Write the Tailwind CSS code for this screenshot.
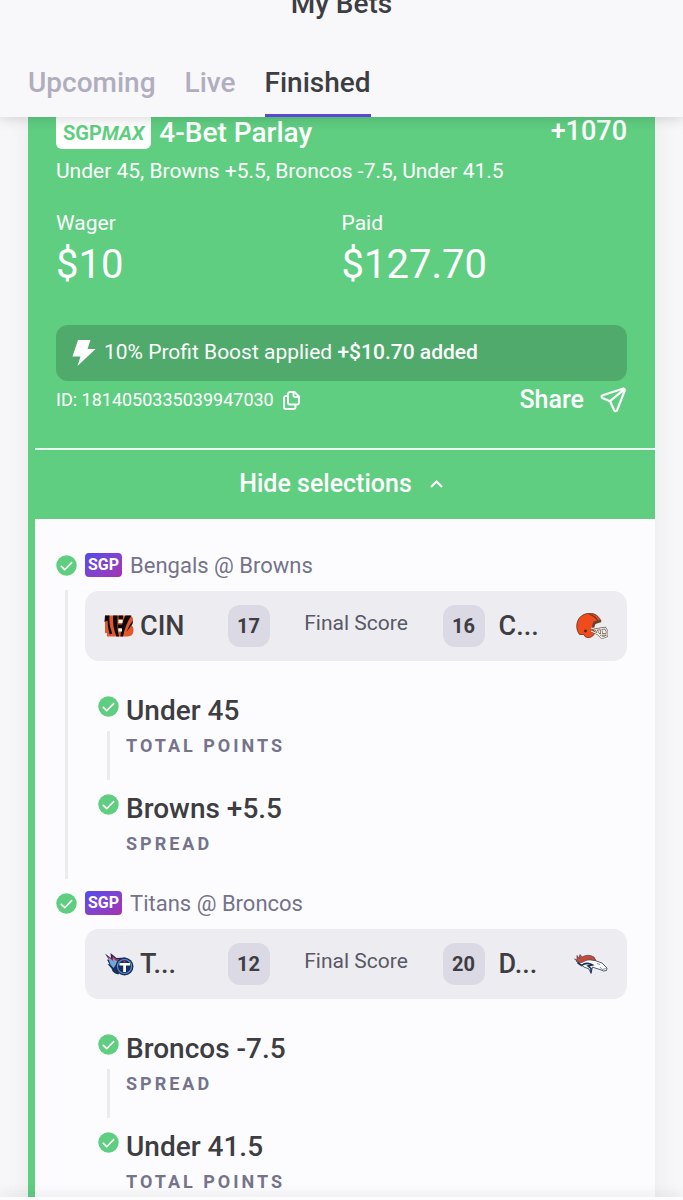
<!DOCTYPE html>
<html lang="en">
<head>
<meta charset="utf-8">
<meta name="viewport" content="width=device-width, initial-scale=1">
<title>My Bets</title>
<script src="https://cdn.jsdelivr.net/npm/@tailwindcss/browser@4"></script>
</head>
<body class="flex h-screen flex-col overflow-hidden bg-[#f7f7fa] font-['Roboto',sans-serif] text-[#3d3d42]">

<svg class="hidden" aria-hidden="true">
  <symbol id="check" viewBox="0 0 22 22">
    <circle cx="11" cy="11" r="10.7" fill="#5fce81"/>
    <path d="M5 11.4l4.1 4L16.9 7.4" fill="none" stroke="#fff" stroke-width="1.7"/>
  </symbol>
</svg>

<header class="relative z-10 shrink-0 bg-[#f8f8fb] shadow-[0_2px_12px_rgba(0,0,0,0.15)]">
  <h1 class="-mt-3 text-center text-[28px] leading-8 font-medium">My Bets</h1>
  <nav class="mt-[47px] flex gap-[29px] px-7 text-[28px] leading-8 font-medium">
    <a href="#" class="pb-[15px] text-[#b0aebe]">Upcoming</a>
    <a href="#" class="pb-[15px] text-[#b0aebe]">Live</a>
    <a href="#" aria-current="page" class="border-b-[3px] border-[#5e48d6] pb-[15px]">Finished</a>
  </nav>
</header>

<main class="min-h-0 flex-1 overflow-hidden px-7">
  <article class="-mt-1 border-l-[7px] border-[#5fce81] bg-[#fcfcfe] shadow-[0_0_24px_rgba(0,0,0,0.06)]">
    <section class="bg-[#5fce81] text-white">
      <div class="pr-7 pb-8 pl-[21px]">
        <div class="flex items-start justify-between">
          <div class="flex items-center gap-2">
            <span class="rounded-md bg-white px-[7px] pt-1 text-xl leading-8 font-bold text-[#5fce81]">SGP<i>MAX</i></span>
            <h2 class="pt-1 text-[28px] leading-8 font-medium">4-Bet Parlay</h2>
          </div>
          <span class="pt-[2px] text-[27px] leading-8 font-medium">+1070</span>
        </div>
        <p class="mt-2 text-[21px] leading-7">Under 45, Browns +5.5, Broncos -7.5, Under 41.5</p>
        <dl class="mt-[26px] grid grid-cols-2">
          <div>
            <dt class="text-[21px] leading-6">Wager</dt>
            <dd class="text-[40px] leading-[60px]">$10</dd>
          </div>
          <div>
            <dt class="text-[21px] leading-6">Paid</dt>
            <dd class="text-[40px] leading-[60px]">$127.70</dd>
          </div>
        </dl>
        <div class="mt-[30px] flex h-14 items-center rounded-xl bg-[#4faa6c] pl-4 text-[21px] leading-7">
          <svg class="mr-2 h-[26px] w-6" viewBox="0 0 24 26" fill="#fff" aria-hidden="true"><path d="M6 0h12.5L15.500 9H23.500L5.500 26L8.500 16.500H0.500z"/></svg>
          <p class="pb-[3px]">10% Profit Boost applied <b class="font-medium">+$10.70 added</b></p>
        </div>
        <div class="mt-[3px] flex items-center justify-between">
          <div class="flex items-center gap-[9px] text-lg">
            <span>ID: 1814050335039947030</span>
            <button type="button" aria-label="Copy ID">
              <svg class="h-[19px] w-[17px]" viewBox="0 0 17 19" fill="none" stroke="#fff" stroke-width="1.9" stroke-linejoin="round" aria-hidden="true"><path d="M7 1h4.500L16 5.500V11.500a2 2 0 0 1-2 2H7a2 2 0 0 1-2-2V3a2 2 0 0 1 2-2zM10.500 1v3.500a1.500 1.500 0 0 0 1.500 1.500h4M5 5H3a2 2 0 0 0-2 2v9a2 2 0 0 0 2 2h7.500a2 2 0 0 0 2-2v-2.500"/></svg>
            </button>
          </div>
          <button type="button" class="flex items-center gap-4 text-[25px] leading-8 font-medium">Share
            <svg class="h-[26px] w-[27px]" viewBox="0 0 27 26" fill="none" stroke="#fff" stroke-width="2.2" stroke-linecap="round" stroke-linejoin="round" aria-hidden="true"><path d="M22.800 1.800L2.600 8.200C1.300 8.700 1.200 10.300 2.400 10.900L10 14.200L14.200 23.300C14.900 24.700 16.600 24.500 17.100 23.100L24.700 3.600C25.100 2.300 24.100 1.400 22.800 1.800zM10 14.200L24.300 2.300"/></svg>
          </button>
        </div>
      </div>
      <button type="button" class="flex w-full items-center justify-center gap-[18px] border-t-2 border-[#e9f8ee] pt-[18px] pr-2 pb-[19px] text-[25px] leading-8 font-medium">Hide selections
        <svg class="h-2 w-[13px]" viewBox="0 0 13 8" fill="none" stroke="#fff" stroke-width="2.200" aria-hidden="true"><path d="M1 7l5.500-5.500L12 7"/></svg>
      </button>
    </section>

    <ul class="pt-9 pr-7 pl-[21px]">
      <li class="flex h-[338px] gap-2">
        <div class="flex w-[21px] flex-col items-center">
          <svg class="size-[21px] shrink-0" role="img" aria-label="Won"><use href="#check"/></svg>
          <span class="my-[14px] w-[3px] flex-1 bg-[#eaeaef]"></span>
        </div>
        <div class="min-w-0 flex-1">
          <h3 class="-mt-[2px] flex h-6 items-center gap-2 text-[22px] text-[#74738a]">
            <span class="rounded bg-linear-to-br from-[#5148f0] to-[#a52fb0] px-[3px] text-base leading-6 font-bold text-white">SGP</span>Bengals @ Browns
          </h3>
          <div class="mt-[14px] grid h-[70px] grid-cols-[1fr_42px_173px_42px_1fr] items-center rounded-[14px] bg-[#ededf1] px-[19px]">
            <div class="flex items-center gap-[6px] text-[27px] font-medium">
              <svg class="h-[22px] w-[30px]" viewBox="0 0 30 22" aria-hidden="true">
                <path fill="#e4572b" d="M1 .5h24q4 0 4 4.500 0 3.500-2.500 4.500Q29.500 11 29.500 15q0 6.500-6 6.500H3V18H1z"/>
                <path fill="#0b0b0d" d="M1 .5h4.500Q4.500 8 8 18v1H5.500Q3.500 12 3.500 5.500L.5 7zM9 .5h4.500v8Q13 14 15 21.500H12.500Q8.500 13 9 .5zM14.500 .5H19V4h-4.500zM14 9.500h5v3.500h-5zM21.500 .5h6Q21.500 9 19 21.500H16.500Q17 8 21.500 .5zM29 5.500q-5 6-6 11Q26 12 28.500 9z"/>
                <path fill="#fff" d="M14.500 5H18.500v3h-4zM14.500 13.500H18v3h-3.500z"/>
              </svg>CIN
            </div>
            <b class="rounded-xl bg-[#dad9e4] text-center text-xl leading-[42px]">17</b>
            <span class="pb-1 text-center text-[21px] text-[#595866]">Final Score</span>
            <b class="rounded-xl bg-[#dad9e4] text-center text-xl leading-[42px]">16</b>
            <div class="flex items-center justify-between pl-[14px] text-[27px] font-medium">C...
              <svg class="h-[26px] w-8" viewBox="0 0 32 26" aria-hidden="true">
                <path fill="#f04b1c" stroke="#603021" stroke-width=".8" d="M3.500 21.500C-1.500 15 .5 4.500 8 1.500c7-3 14-.5 17 6.500l-6 1.500-2.500 5 2 4.500c.5 4-6 7.500-9.500 4.500l-1-2z"/>
                <path fill="none" stroke="#79392a" stroke-width="1.200" d="M13 .9q7 2.500 9.500 8"/>
                <path fill="#654331" d="M17.500 8.500l7-1.500 1 2-6 2-1.500 4-2-2z"/>
                <circle cx="9.500" cy="18" r="1.400" fill="#472a22"/>
                <path fill="none" stroke="#6c594b" stroke-width="2.300" d="M15 15l5 1.500 9-1.500 2 3v5l-5 2-4-4-7-3M20 16.500l3 5 8-.5M25 15.500l1 9"/>
                <path fill="none" stroke="#f5efe9" stroke-width="1.100" d="M15 15l5 1.500 9-1.500 2 3v5l-5 2-4-4-7-3M20 16.500l3 5 8-.5M25 15.500l1 9"/>
              </svg>
            </div>
          </div>
          <ul class="mt-[35px] pl-[13px]">
            <li class="flex h-[98px] gap-[7px]">
              <div class="flex w-[21px] flex-col items-center">
                <svg class="size-[21px] shrink-0" role="img" aria-label="Won"><use href="#check"/></svg>
                <span class="my-[14px] w-[3px] flex-1 bg-[#eaeaef]"></span>
              </div>
              <div>
                <h4 class="-mt-[1px] text-[28px] leading-8 font-medium">Under 45</h4>
                <p class="mt-[7px] text-lg leading-6 font-bold tracking-[3px] text-[#75748c] uppercase">Total points</p>
              </div>
            </li>
            <li class="flex h-[98px] gap-[7px]">
              <svg class="size-[21px] shrink-0" role="img" aria-label="Won"><use href="#check"/></svg>
              <div>
                <h4 class="-mt-[1px] text-[28px] leading-8 font-medium">Browns +5.5</h4>
                <p class="mt-[7px] text-lg leading-6 font-bold tracking-[3px] text-[#75748c] uppercase">Spread</p>
              </div>
            </li>
          </ul>
        </div>
      </li>

      <li class="flex h-[338px] gap-2">
        <div class="w-[21px]">
          <svg class="size-[21px] shrink-0" role="img" aria-label="Won"><use href="#check"/></svg>
        </div>
        <div class="min-w-0 flex-1">
          <h3 class="-mt-[2px] flex h-6 items-center gap-2 text-[22px] text-[#74738a]">
            <span class="rounded bg-linear-to-br from-[#5148f0] to-[#a52fb0] px-[3px] text-base leading-6 font-bold text-white">SGP</span>Titans @ Broncos
          </h3>
          <div class="mt-[14px] grid h-[70px] grid-cols-[1fr_42px_173px_42px_1fr] items-center rounded-[14px] bg-[#ededf1] px-[19px]">
            <div class="flex items-center gap-[6px] text-[27px] font-medium">
              <svg class="h-[23px] w-[30px]" viewBox="0 0 30 23" aria-hidden="true">
                <path fill="#17305f" d="M1 .5l6 4.500L6.500 0l6 5 9-.5-7 17q-6-1-7-6L3.500 11l2 .5L3 6.500l2 .5z"/>
                <path fill="#d0354f" d="M3 2l6 5-.5-4 4 3.500 3-.5-5 8-3.500-3z"/>
                <path fill="#6fa8dc" d="M4.500 4.500l5 4L8.500 5l5 4-4 6Q6 12 5.500 9z"/>
                <circle cx="20.500" cy="13.500" r="9" fill="#17305f"/>
                <circle cx="20.500" cy="13.500" r="7.600" fill="#5b93cf"/>
                <circle cx="20.500" cy="13.500" r="6.400" fill="#17305f"/>
                <path fill="#fff" d="M15.500 10h10.500v2.500h-4V19h-2.800v-6.500h-3.700z"/>
                <circle cx="20.500" cy="8.500" r="1" fill="#d0354f"/>
              </svg>T...
            </div>
            <b class="rounded-xl bg-[#dad9e4] text-center text-xl leading-[42px]">12</b>
            <span class="pb-1 text-center text-[21px] text-[#595866]">Final Score</span>
            <b class="rounded-xl bg-[#dad9e4] text-center text-xl leading-[42px]">20</b>
            <div class="flex items-center justify-between pl-[14px] text-[27px] font-medium">D...
              <svg class="h-5 w-[34px]" viewBox="0 0 34 20" aria-hidden="true">
                <path fill="#fff" stroke="#3f5068" stroke-width=".9" d="M2 7l8-2 11 1.500 7 2.500 5 5-.5 2.500-3 .5-3.500-1.500-5-1.500-2.500-1-1.500 6.500-2-4.500-5-2z"/>
                <path fill="#c34a38" stroke="#5d4050" stroke-width=".7" d="M.5 5L3 6 3 1.500 5 4 6 .5l2 2.500q6-3.500 12 0l2 3.500q-6-2-10 0L8 8.500H5z"/>
                <path fill="none" stroke="#173055" stroke-width="1.600" d="M3.500 8.500l4 3q5-4 11-.5l-4.500 1 3 2.500v4"/>
                <path fill="none" stroke="#7d8797" stroke-width=".9" d="M26 13l2 2.500 4.500-1M23 9.500l3 1"/>
              </svg>
            </div>
          </div>
          <ul class="mt-[35px] pl-[13px]">
            <li class="flex h-[98px] gap-[7px]">
              <div class="flex w-[21px] flex-col items-center">
                <svg class="size-[21px] shrink-0" role="img" aria-label="Won"><use href="#check"/></svg>
                <span class="my-[14px] w-[3px] flex-1 bg-[#eaeaef]"></span>
              </div>
              <div>
                <h4 class="-mt-[1px] text-[28px] leading-8 font-medium">Broncos -7.5</h4>
                <p class="mt-[7px] text-lg leading-6 font-bold tracking-[3px] text-[#75748c] uppercase">Spread</p>
              </div>
            </li>
            <li class="flex h-[98px] gap-[7px]">
              <svg class="size-[21px] shrink-0" role="img" aria-label="Won"><use href="#check"/></svg>
              <div>
                <h4 class="-mt-[1px] text-[28px] leading-8 font-medium">Under 41.5</h4>
                <p class="mt-[7px] text-lg leading-6 font-bold tracking-[3px] text-[#75748c] uppercase">Total points</p>
              </div>
            </li>
          </ul>
        </div>
      </li>
    </ul>
  </article>
</main>

<footer class="relative z-10 h-[3px] shrink-0 bg-[#fcfcfe] shadow-[0_-2px_12px_rgba(0,0,0,0.18)]"></footer>
</body>
</html>
